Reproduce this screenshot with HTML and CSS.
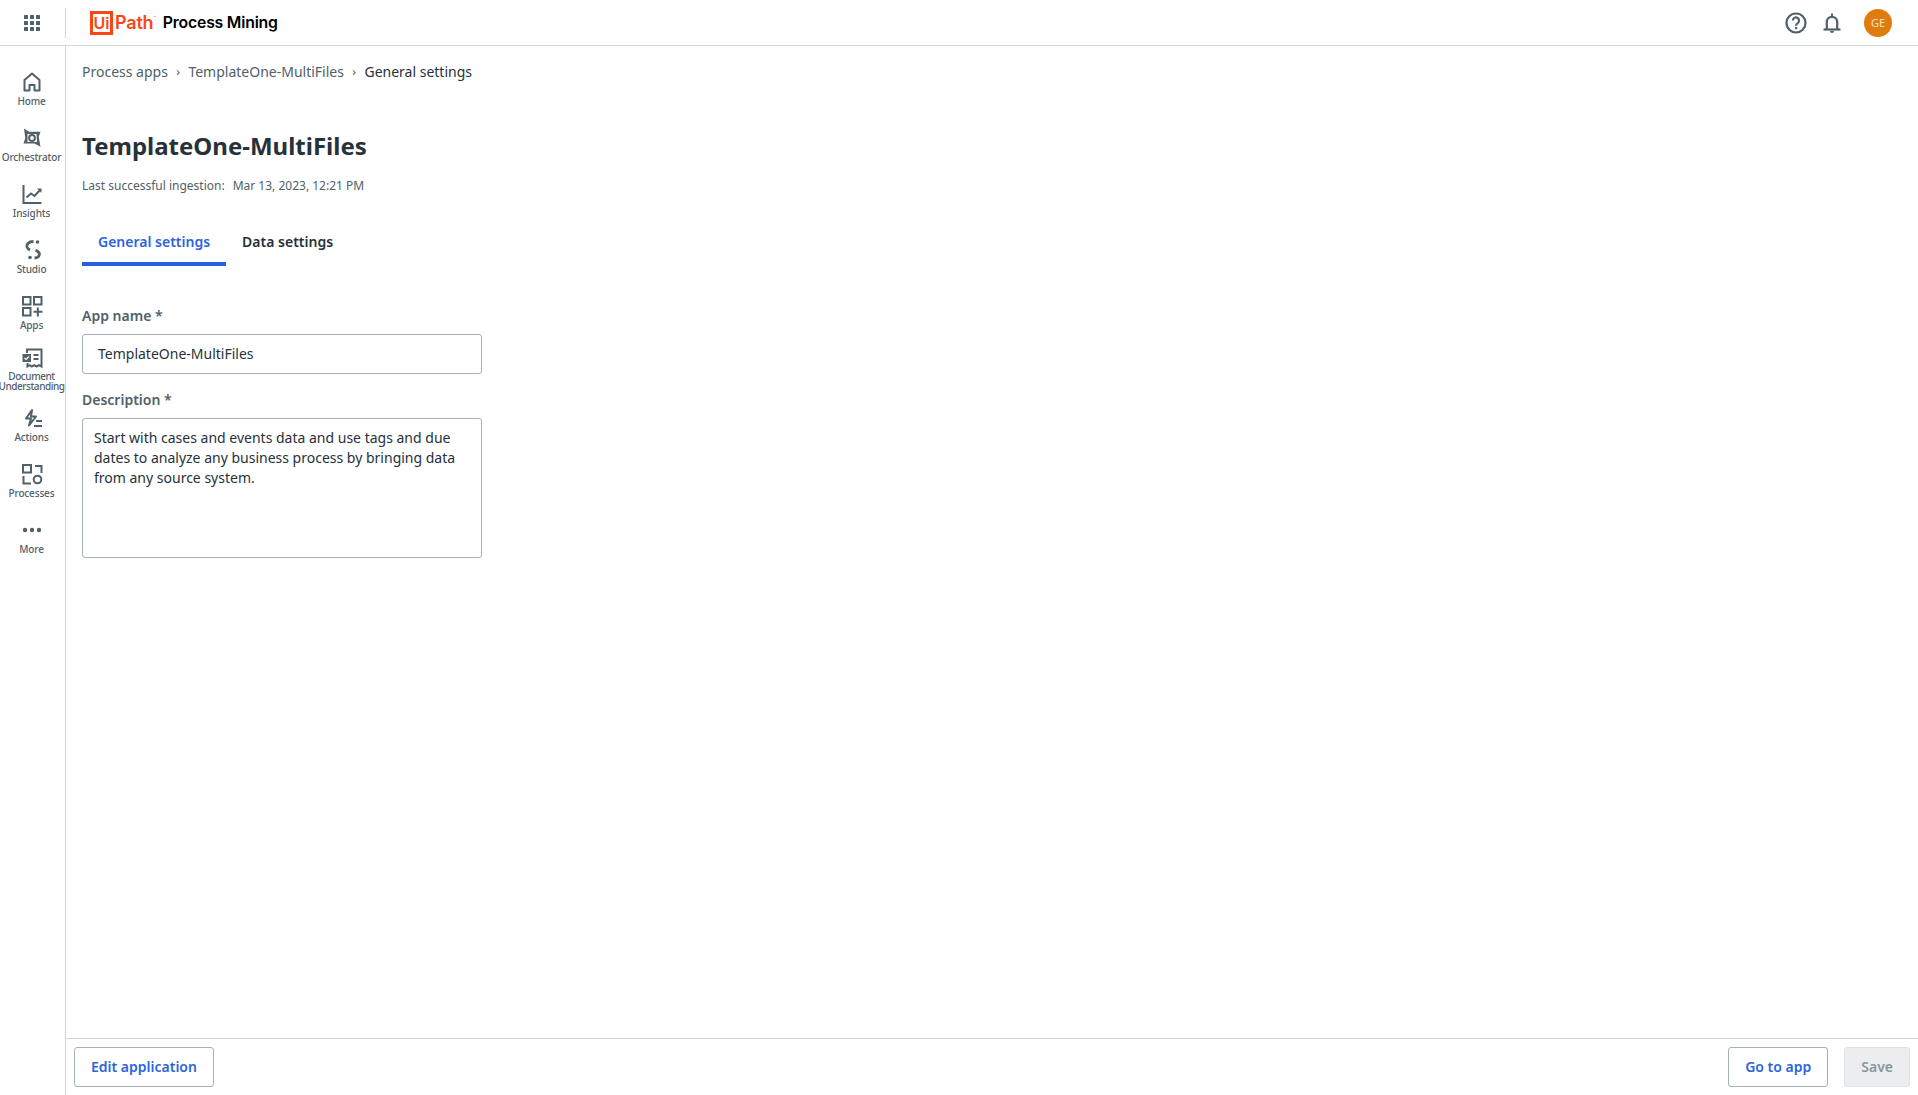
FILE: index.html
```html
<!DOCTYPE html>
<html lang="en">
<head>
<meta charset="utf-8">
<title>TemplateOne-MultiFiles - Process Mining</title>
<link rel="stylesheet" href="styles.css">
</head>
<body>
<div class="app">
  <header class="topbar">
    <div class="launcher">
      <svg class="grid-icon" width="18" height="18" viewBox="0 0 18 18"><g fill="#526069"><rect x="1" y="1" width="4" height="4" rx=".5"/><rect x="7" y="1" width="4" height="4" rx=".5"/><rect x="13" y="1" width="4" height="4" rx=".5"/><rect x="1" y="7" width="4" height="4" rx=".5"/><rect x="7" y="7" width="4" height="4" rx=".5"/><rect x="13" y="7" width="4" height="4" rx=".5"/><rect x="1" y="13" width="4" height="4" rx=".5"/><rect x="7" y="13" width="4" height="4" rx=".5"/><rect x="13" y="13" width="4" height="4" rx=".5"/></g></svg>
    </div>
    <div class="brand">
      <span class="logo-box">Ui</span><span class="logo-path">Path</span><sup class="logo-tm">™</sup>
      <span class="product">Process Mining</span>
    </div>
    <div class="top-actions">
      <svg width="24" height="24" viewBox="0 0 24 24" class="help"><circle cx="12" cy="12" r="9.500" fill="none" stroke="#526069" stroke-width="2.200"/><path d="M8.900 9.600a3.100 3.100 0 1 1 4.900 2.500c-1.200.8-1.800 1.400-1.800 2.600" fill="none" stroke="#526069" stroke-width="2.200"/><rect x="11" y="16" width="2.200" height="2.200" fill="#526069"/></svg>
      <svg width="24" height="24" viewBox="0 0 24 24" class="bell"><path d="M6.800 18v-7a5.200 5.200 0 0 1 10.400 0v7" fill="none" stroke="#526069" stroke-width="2.200"/><path d="M3.500 18.500h17" stroke="#526069" stroke-width="2.200"/><path d="M10 20h4a2 2 0 0 1-4 0z" fill="#526069"/><rect x="11" y="2.500" width="2" height="3" fill="#526069"/></svg>
      <span class="avatar">GE</span>
    </div>
  </header>
  <div class="body">
    <nav class="sidebar">
      <a class="nav-item"><svg width="24" height="24" viewBox="0 0 24 24"><path d="M4.500 20.500V10L12 3.500l7.500 6.500v10.500h-5V15h-5v5.500z" fill="none" stroke="#526069" stroke-width="2" stroke-linejoin="round"/></svg><span>Home</span></a>
      <a class="nav-item"><svg width="24" height="24" viewBox="0 0 24 24"><path fill-rule="evenodd" fill="#526069" d="M4 2.500L9 5.800h11.500l-1.800 5 1.800 10-6-3.300H3.500l1.800-5.500zM7.500 8v8h9.500l-.5-8z"/><circle cx="12" cy="12" r="2.900" fill="none" stroke="#526069" stroke-width="2"/></svg><span>Orchestrator</span></a>
      <a class="nav-item"><svg width="24" height="24" viewBox="0 0 24 24"><path d="M3.500 3v18h18" fill="none" stroke="#526069" stroke-width="2"/><path d="M6.500 15.500l4.500-4 3.500 2.500 6-6.500" fill="none" stroke="#526069" stroke-width="2"/><path d="M17 6.500h4.500V11z" fill="#526069"/></svg><span>Insights</span></a>
      <a class="nav-item"><svg width="24" height="24" viewBox="0 0 24 24"><path d="M13.500 3.500C8.500 3.500 6.500 6.500 7 9c.4 1.500 1.500 2.300 3 2.800M15.500 12.300c2.800 1 4.300 2.800 3.800 4.700-.5 2-2.500 3-4.800 3" fill="none" stroke="#526069" stroke-width="2.800" stroke-linecap="butt"/><circle cx="17.500" cy="4" r="1.800" fill="#526069"/><circle cx="10" cy="19.500" r="1.800" fill="#526069"/></svg><span>Studio</span></a>
      <a class="nav-item"><svg width="24" height="24" viewBox="0 0 24 24"><g fill="none" stroke="#526069" stroke-width="2"><rect x="3" y="3" width="7.500" height="7.500"/><rect x="14" y="3" width="7.500" height="7.500"/><rect x="3" y="14" width="7.500" height="7.500"/><path d="M13.500 17.800h9M17.800 13.500v9"/></g></svg><span>Apps</span></a>
      <a class="nav-item nav-item-tall"><svg width="24" height="24" viewBox="0 0 24 24"><path d="M7 7V3.500h14.500v17l-2.500-1.300-2.400 1.300-2.400-1.300-2.400 1.300-2-1.300-2.300 1.300V17" fill="none" stroke="#526069" stroke-width="2"/><rect x="2.500" y="8" width="8.500" height="8" fill="#526069"/><path d="M4.500 12l1.500 1.500 3-3" fill="none" stroke="#fff" stroke-width="1.200"/><path d="M13.500 9h5M13.500 13h5" stroke="#526069" stroke-width="2"/></svg><span>Document Understanding</span></a>
      <a class="nav-item"><svg width="24" height="24" viewBox="0 0 24 24"><path d="M12 4L6 12.500h5l-2 7 7-9h-5z" fill="none" stroke="#526069" stroke-width="2" stroke-linejoin="round"/><path d="M16 15h6M14 20h8" stroke="#526069" stroke-width="2"/></svg><span>Actions</span></a>
      <a class="nav-item"><svg width="24" height="24" viewBox="0 0 24 24"><g fill="none" stroke="#526069" stroke-width="2"><rect x="3" y="3" width="8" height="7.500"/><path d="M15 4h6.500v7"/><path d="M3.500 14v7.500H11"/><circle cx="17.500" cy="17.500" r="3.800"/></g></svg><span>Processes</span></a>
      <a class="nav-item"><svg width="24" height="24" viewBox="0 0 24 24"><g fill="#526069"><circle cx="5" cy="12" r="2.200"/><circle cx="12" cy="12" r="2.200"/><circle cx="19" cy="12" r="2.200"/></g></svg><span>More</span></a>
    </nav>
    <div class="main">
      <main class="content">
        <ol class="crumbs">
          <li>Process apps</li><li class="sep">›</li><li>TemplateOne-MultiFiles</li><li class="sep">›</li><li class="current">General settings</li>
        </ol>
        <h1 class="title">TemplateOne-MultiFiles</h1>
        <p class="meta"><span>Last successful ingestion:</span><span>Mar 13, 2023, 12:21 PM</span></p>
        <div class="tabs">
          <div class="tab tab-active">General settings</div>
          <div class="tab">Data settings</div>
        </div>
        <form class="form">
          <label class="field-label">App name *</label>
          <div class="input">TemplateOne-MultiFiles</div>
          <label class="field-label field-label-second">Description *</label>
          <div class="textarea">Start with cases and events data and use tags and due dates to analyze any business process by bringing data from any source system.</div>
        </form>
      </main>
      <footer class="footer">
        <button class="btn" type="button">Edit application</button>
        <div class="footer-right">
          <button class="btn" type="button">Go to app</button>
          <button class="btn btn-disabled" type="button">Save</button>
        </div>
      </footer>
    </div>
  </div>
</div>
</body>
</html>
```
FILE: styles.css
```css
* { box-sizing: border-box; }
html, body { margin: 0; height: 100%; }
body { font-family: "Noto Sans", sans-serif; color: #273139; background: #fff; overflow: hidden; }
.app { height: 1095px; display: flex; flex-direction: column; }

.topbar { height: 45px; flex: none; display: flex; align-items: center; border-bottom: 1px solid #cfd8dd; box-sizing: content-box; }
.launcher { width: 66px; height: 30px; display: flex; align-items: center; justify-content: center; border-right: 1px solid #cfd8dd; padding-right: 1px; }
.brand { display: flex; align-items: center; margin-left: 24px; }
.logo-box { width: 23px; height: 24px; border: 3px solid #fa4616; color: #fa4616; font: 600 16px/18px "Inter", sans-serif; text-align: center; }
.logo-path { color: #fa4616; font: 600 18px/24px "Inter", sans-serif; margin-left: 2px; letter-spacing: -.2px; }
.logo-tm { color: #fa4616; font: 400 4px/4px "Inter", sans-serif; align-self: flex-start; margin: 5px 0 0 0; }
.product { font: 600 15.800px/24px "Inter", sans-serif; color: #000; margin-left: 7px; letter-spacing: -.2px; }
.top-actions { margin-left: auto; display: flex; align-items: center; padding-right: 26px; }
.help { margin-right: 12px; }
.bell { margin-right: 20px; }
.avatar { width: 28px; height: 28px; border-radius: 50%; background: #e07c0c; color: #fbe3c6; font-size: 11px; display: flex; align-items: center; justify-content: center; }

.body { flex: 1; min-height: 0; display: flex; }
.sidebar { width: 66px; flex: none; border-right: 1px solid #cfd8dd; padding-top: 24px; }
.nav-item { display: flex; flex-direction: column; align-items: center; height: 56px; color: #526069; font-size: 10px; line-height: 10px; text-align: center; }
.nav-item svg { flex: none; width: 24px; height: 24px; margin: 0 0 2px -2px; }
.nav-item span { display: block; width: 66px; margin-left: -2px; color: #526069; font-weight: 500; letter-spacing: -.15px; }
.nav-item-tall { height: 60px; margin-top: -4px; }
.nav-item-tall span { letter-spacing: -.45px; line-height: 9.500px; }

.main { flex: 1; min-width: 0; display: flex; flex-direction: column; }
.content { flex: 1; padding: 16px 16px 0 16px; }
.crumbs { list-style: none; margin: 0; padding: 0; display: flex; font-size: 14px; line-height: 20px; color: #526069; }
.crumbs .sep { margin: 0 8.400px; font-size: 12px; }
.crumbs .current { color: #273139; }
.title { margin: 48px 0 0; font-size: 24px; line-height: 32px; font-weight: 700; color: #273139; }
.meta { margin: 16px 0 0; font-size: 12px; line-height: 16px; color: #526069; display: flex; gap: 8px; }
.tabs { display: flex; margin-top: 24px; }
.tab { height: 48px; padding: 0 16px; font-size: 14px; font-weight: 600; line-height: 20px; padding-top: 14px; color: #273139; border-bottom: 4px solid transparent; }
.tab-active { color: #2c64dc; border-bottom-color: #2563dc; }
.form { margin-top: 40px; width: 400px; }
.field-label { display: block; font-size: 14px; line-height: 20px; font-weight: 600; color: #526069; }
.field-label-second { margin-top: 16px; }
.input { margin-top: 8px; height: 40px; padding: 0 15px; border: 1px solid #a4b1b8; border-radius: 3px; font-size: 14px; line-height: 38px; }
.textarea { margin-top: 8px; height: 140px; padding: 9px 11px; border: 1px solid #a4b1b8; border-radius: 3px; font-size: 14px; line-height: 20px; }

.footer { height: 57px; flex: none; border-top: 1px solid #cfd8dd; padding: 8px; display: flex; justify-content: space-between; }
.footer-right { display: flex; gap: 16px; }
.btn { height: 40px; padding: 0 16px; background: #fff; border: 1px solid #a4b1b8; border-radius: 3px; color: #2c64dc; font: 600 14px/20px "Noto Sans", sans-serif; }
.btn-disabled { padding: 0 16px; background: #ebedef; border-color: #dfe3e6; color: #8a97a0; }
```
